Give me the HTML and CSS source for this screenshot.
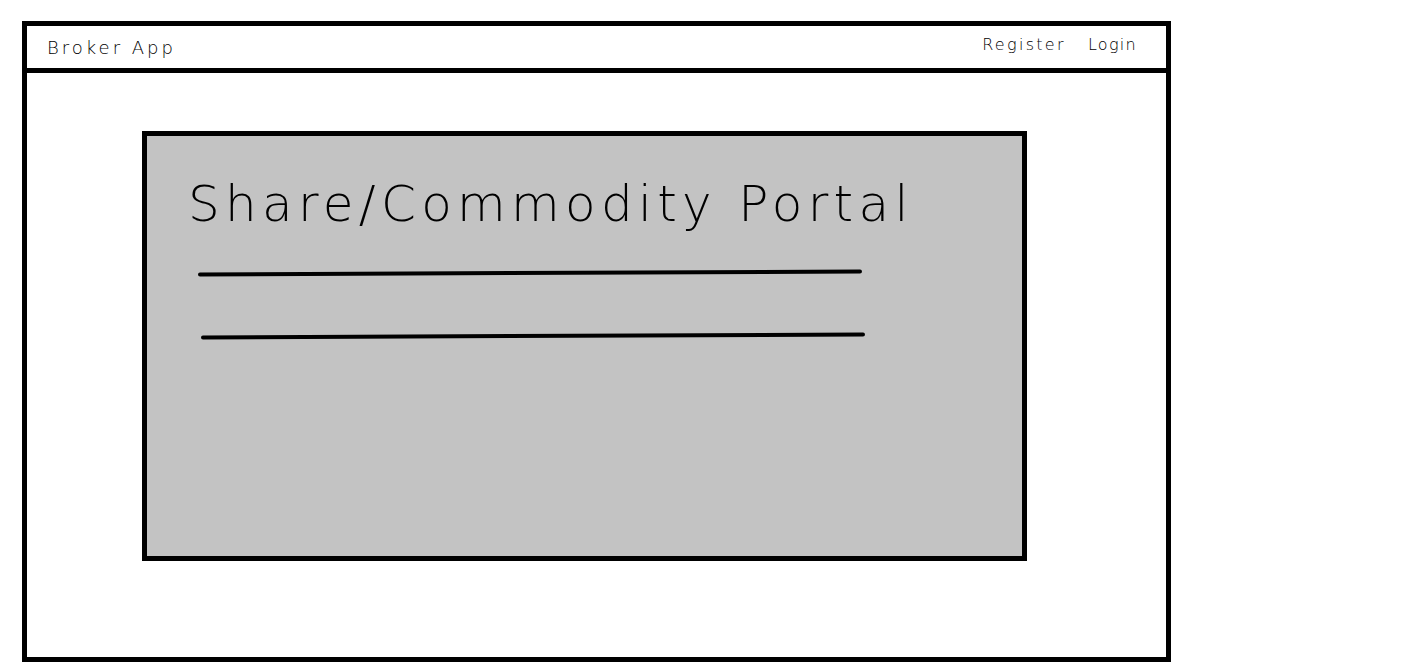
FILE: index.html
```html
<!DOCTYPE html>
<html>
<head>
<meta charset="utf-8">
<link rel="stylesheet" href="styles.css">
</head>
<body>
<div class="frame">
  <header class="topbar">
    <span class="brand">Broker App</span>
    <nav class="links">
      <span class="link link-register">Register</span>
      <span class="link">Login</span>
    </nav>
  </header>
  <main class="content">
    <section class="portal">
      <h1 class="title">Share/Commodity Portal</h1>
      <div class="rule rule-one"></div>
      <div class="rule rule-two"></div>
    </section>
  </main>
</div>
</body>
</html>
```

FILE: styles.css
```css
html, body {
  margin: 0;
  padding: 0;
  background: #ffffff;
}
body {
  font-family: "DejaVu Sans", "Liberation Sans", sans-serif;
  font-weight: 200;
  color: #000;
}
.frame {
  box-sizing: border-box;
  margin: 21px 0 0 22px;
  width: 1149px;
  height: 641px;
  border: 5px solid #000;
  display: flex;
  flex-direction: column;
}
.topbar {
  box-sizing: border-box;
  height: 47px;
  border-bottom: 5px solid #000;
  display: flex;
  justify-content: space-between;
  align-items: flex-start;
  padding: 0 29px 0 20px;
}
.brand {
  font-size: 18px;
  letter-spacing: 3px;
  margin-top: 11px;
}
.links {
  display: flex;
  gap: 22px;
  margin-top: 9px;
}
.link {
  font-size: 16px;
  letter-spacing: 1.3px;
}
.link-register {
  letter-spacing: 2.3px;
}
.content {
  flex: 1;
  padding: 58px 0 0 115px;
}
.portal {
  box-sizing: border-box;
  width: 885px;
  height: 430px;
  border: 5px solid #000;
  background: #c3c3c3;
  padding: 40px 0 0 41px;
}
.title {
  margin: 0;
  font-weight: 200;
  font-size: 50px;
  letter-spacing: 5.3px;
  line-height: 56px;
}
.rule {
  height: 4px;
  width: 664px;
  background: #000;
  border-radius: 2px;
  transform: rotate(-0.26deg);
}
.rule-one {
  margin: 39px 0 0 10px;
}
.rule-two {
  margin: 59px 0 0 13px;
}
```
